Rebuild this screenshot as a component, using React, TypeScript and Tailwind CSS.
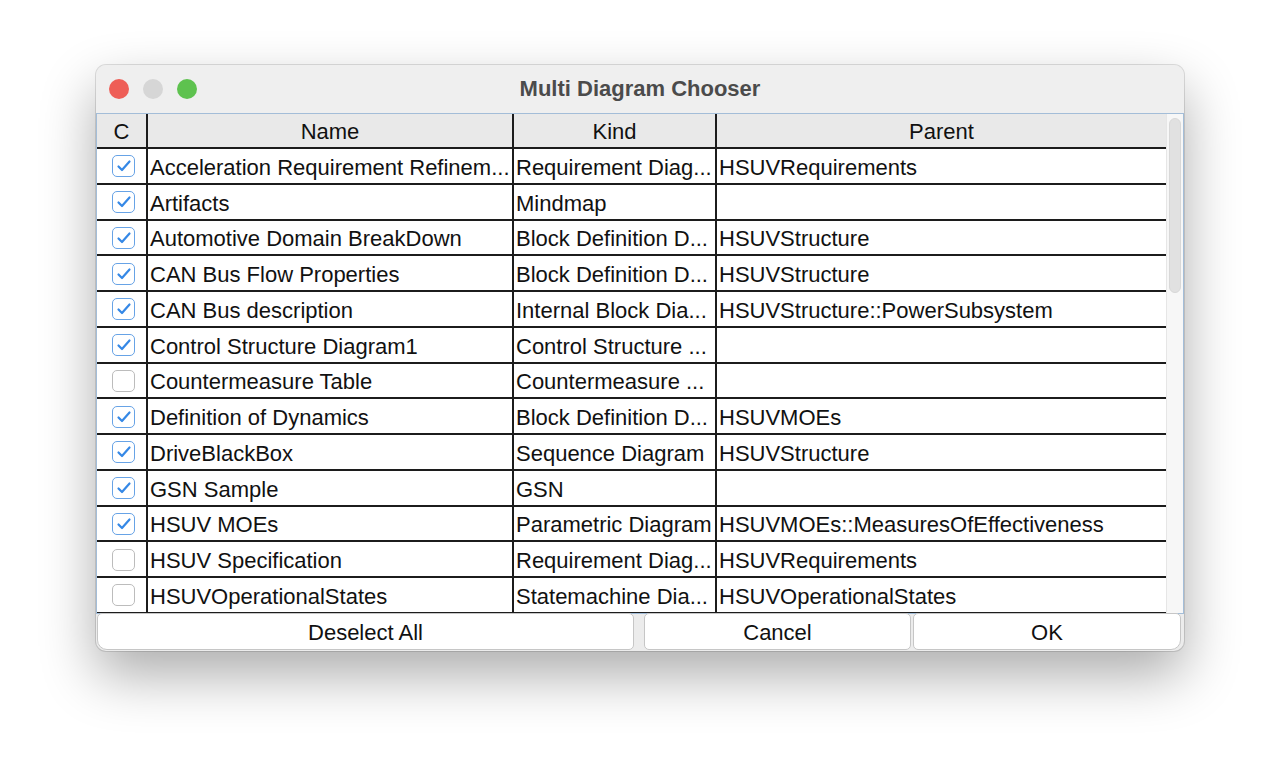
import React from "react";

type Row = { c: boolean; name: string; kind: string; parent: string };

const rows: Row[] = [
  { c: true, name: "Acceleration Requirement Refinem...", kind: "Requirement Diag...", parent: "HSUVRequirements" },
  { c: true, name: "Artifacts", kind: "Mindmap", parent: "" },
  { c: true, name: "Automotive Domain BreakDown", kind: "Block Definition D...", parent: "HSUVStructure" },
  { c: true, name: "CAN Bus Flow Properties", kind: "Block Definition D...", parent: "HSUVStructure" },
  { c: true, name: "CAN Bus description", kind: "Internal Block Dia...", parent: "HSUVStructure::PowerSubsystem" },
  { c: true, name: "Control Structure Diagram1", kind: "Control Structure ...", parent: "" },
  { c: false, name: "Countermeasure Table", kind: "Countermeasure ...", parent: "" },
  { c: true, name: "Definition of Dynamics", kind: "Block Definition D...", parent: "HSUVMOEs" },
  { c: true, name: "DriveBlackBox", kind: "Sequence Diagram", parent: "HSUVStructure" },
  { c: true, name: "GSN Sample", kind: "GSN", parent: "" },
  { c: true, name: "HSUV MOEs", kind: "Parametric Diagram", parent: "HSUVMOEs::MeasuresOfEffectiveness" },
  { c: false, name: "HSUV Specification", kind: "Requirement Diag...", parent: "HSUVRequirements" },
  { c: false, name: "HSUVOperationalStates", kind: "Statemachine Dia...", parent: "HSUVOperationalStates" },
];

function CheckBox({ checked }: { checked: boolean }) {
  return (
    <div
      className={
        checked
          ? "w-[23px] h-[22px] rounded-[5px] border-[1.5px] border-[#67a3e6] bg-white flex items-center justify-center"
          : "w-[23px] h-[22px] rounded-[5px] border-[1.5px] border-[#bcbcbc] bg-white"
      }
    >
      {checked && (
        <svg width="16" height="14" viewBox="0 0 16 14" fill="none">
          <path d="M2.5 7.5 L6 11 L13.5 2.5" stroke="#3588e6" strokeWidth="2.2" strokeLinecap="round" strokeLinejoin="round" />
        </svg>
      )}
    </div>
  );
}

export default function App() {
  return (
    <div
      className="w-[1280px] h-[778px] bg-white pt-[65px] pl-[96px]"
      style={{ fontFamily: '"Liberation Sans", Arial, sans-serif' }}
    >
      <div className="w-[1088px] h-[586px] rounded-[10px] bg-[#ececec] flex flex-col overflow-hidden shadow-[0_0_0_1px_rgba(0,0,0,0.12),0_24px_55px_rgba(0,0,0,0.33)]">
        {/* title bar */}
        <div className="relative h-[48px] shrink-0 flex items-center pl-[13px] gap-[14px] bg-[#efefef]">
          <div className="w-[20px] h-[20px] rounded-full bg-[#ee5e57]" />
          <div className="w-[20px] h-[20px] rounded-full bg-[#d6d6d6]" />
          <div className="w-[20px] h-[20px] rounded-full bg-[#5ec24f]" />
          <div className="absolute inset-0 flex items-center justify-center pb-[2px] text-[22px] font-bold text-[#4b4b4b]">
            Multi Diagram Chooser
          </div>
        </div>

        {/* table */}
        <div className="h-[501px] shrink-0 border border-[#a3bdd8] bg-white flex overflow-hidden">
          <div className="w-[1069px] flex flex-col text-[22px] text-[#111]">
            <div className="h-[35px] shrink-0 flex bg-[#e9e9e9] border-b-2 border-[#1c1c1c]">
              <div className="w-[51px] border-r-2 border-[#1c1c1c] flex items-center justify-center pt-[2px]">C</div>
              <div className="w-[366px] border-r-2 border-[#1c1c1c] flex items-center justify-center pt-[2px]">Name</div>
              <div className="w-[203px] border-r-2 border-[#1c1c1c] flex items-center justify-center pt-[2px]">Kind</div>
              <div className="flex-1 flex items-center justify-center pt-[2px]">Parent</div>
            </div>
            {rows.map((r, i) => (
              <div key={i} className="h-[35.75px] shrink-0 flex border-b-2 border-[#1c1c1c] bg-white">
                <div className="w-[51px] border-r-2 border-[#1c1c1c] flex items-center pl-[15px] pt-[1px]">
                  <CheckBox checked={r.c} />
                </div>
                <div className="w-[366px] border-r-2 border-[#1c1c1c] flex items-center pl-[2px] pt-[3px] whitespace-nowrap overflow-hidden">
                  {r.name}
                </div>
                <div className="w-[203px] border-r-2 border-[#1c1c1c] flex items-center pl-[2px] pt-[3px] whitespace-nowrap overflow-hidden">
                  {r.kind}
                </div>
                <div className="flex-1 flex items-center pl-[2px] pt-[3px] whitespace-nowrap overflow-hidden">{r.parent}</div>
              </div>
            ))}
          </div>
          {/* scrollbar */}
          <div className="w-[17px] shrink-0 bg-[#f7f7f7] border-l border-[#e6e6e6] pt-[4px] pl-[2px]">
            <div className="w-[12px] h-[175px] rounded-full bg-[#e1e1e1] border border-[#d8d8d8]" />
          </div>
        </div>

        {/* buttons */}
        <div className="flex-1 flex items-stretch pb-[1px] text-[22px] text-[#111]">
          <div className="w-[537px] ml-[1px] mt-[-1px] pt-[2px] bg-white border border-[#c6c6c6] rounded-[5px] rounded-bl-[10px] flex items-center justify-center">
            Deselect All
          </div>
          <div className="w-[267px] ml-[10px] mt-[-1px] pt-[2px] bg-white border border-[#c6c6c6] rounded-[5px] flex items-center justify-center">
            Cancel
          </div>
          <div className="w-[268px] ml-[2px] mt-[-1px] pt-[2px] bg-white border border-[#c6c6c6] rounded-[5px] rounded-br-[10px] flex items-center justify-center">
            OK
          </div>
        </div>
      </div>
    </div>
  );
}
